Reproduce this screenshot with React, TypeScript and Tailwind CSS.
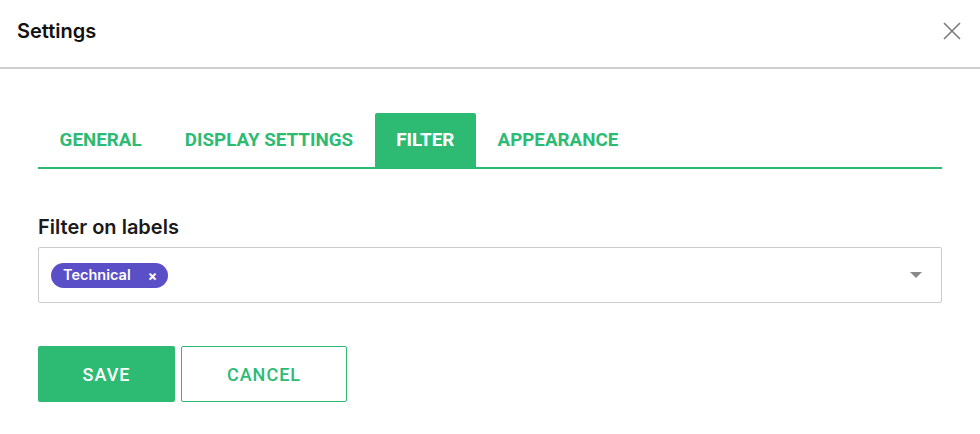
import React from "react";

const inter = { fontFamily: "Inter, Roboto, 'Liberation Sans', sans-serif" };

export default function App() {
  return (
    <div className="w-[980px] h-[434px] bg-white" style={{ fontFamily: "Roboto, 'Liberation Sans', sans-serif" }}>
      <div className="h-[69px] flex items-center justify-between pl-[17px] pr-[18px] pb-[5px] border-b-2 border-[#cfcfcf]">
        <span className="text-[20px] font-semibold text-[#111]" style={inter}>Settings</span>
        <svg width="20" height="20" viewBox="0 0 20 20" className="text-[#7a7a7a]">
          <path d="M2 2 L18 18 M18 2 L2 18" stroke="currentColor" strokeWidth="1.6" fill="none" />
        </svg>
      </div>
      <div className="px-[38px] pt-[44px]">
        <div className="flex border-b-2 border-[#2dbb74] h-[56px]">
          {["GENERAL", "DISPLAY SETTINGS", "FILTER", "APPEARANCE"].map((t) => (
            <div
              key={t}
              className={
                "flex items-center pt-[1px] px-[21.6px] text-[18.8px] font-bold rounded-t-[2px] " +
                (t === "FILTER" ? "bg-[#2dbb74] text-white" : "text-[#2dbb74]")
              }
            >
              {t}
            </div>
          ))}
        </div>
        <div className="mt-[48px] text-[20px] font-semibold text-[#1a1a1a] leading-[20px]" style={inter}>Filter on labels</div>
        <div className="mt-[10px] h-[56px] border border-[#cccccc] rounded-[2px] flex items-center justify-between pl-[12px] pr-[19px]">
          <div className="h-[25px] rounded-full bg-[#5b4fc7] flex items-center pl-[12px] pr-[11px] text-white text-[14.5px] font-semibold" style={inter}>
            <span>Technical</span>
            <span className="ml-[17px] text-[14px] font-bold">×</span>
          </div>
          <svg width="12" height="7" viewBox="0 0 12 7">
            <path d="M0 0 L12 0 L6 6 Z" fill="#8a8a8a" />
          </svg>
        </div>
        <div className="mt-[43px] flex gap-[6px]">
          <button className="w-[137px] h-[56px] bg-[#2dbb74] text-white text-[18px] font-medium tracking-[1px] rounded-[2px]">
            SAVE
          </button>
          <button className="w-[166px] h-[56px] border border-[#2dbb74] text-[#2dbb74] text-[18px] font-medium tracking-[1px] rounded-[2px] bg-white">
            CANCEL
          </button>
        </div>
      </div>
    </div>
  );
}
